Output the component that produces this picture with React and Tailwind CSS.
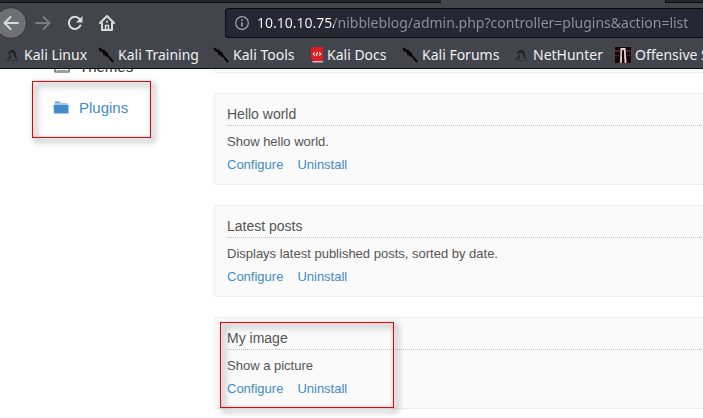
import React from "react";

function BackIcon() {
  return (
    <svg width="16" height="16" viewBox="0 0 16 16" fill="none" stroke="#dadad8" strokeWidth="2" strokeLinecap="round" strokeLinejoin="round">
      <path d="M15 8H1.5M7.5 2L1.5 8l6 6" />
    </svg>
  );
}

function ForwardIcon() {
  return (
    <svg width="16" height="16" viewBox="0 0 16 16" fill="none" stroke="#7b7d81" strokeWidth="2" strokeLinecap="round" strokeLinejoin="round">
      <path d="M1 8h13.5M8.500 2l6 6-6 6" />
    </svg>
  );
}

function ReloadIcon() {
  return (
    <svg width="16" height="16" viewBox="0 0 16 16" fill="none" stroke="#dadad8" strokeWidth="2" strokeLinecap="round">
      <path d="M13.300 10.500A6 6 0 1 1 12.500 4" />
      <path d="M15.500 1v6.500H9z" fill="#dadad8" stroke="none" />
    </svg>
  );
}

function HomeIcon() {
  return (
    <svg width="16" height="16" viewBox="0 0 16 16" fill="none" stroke="#dadad8" strokeWidth="2" strokeLinecap="round" strokeLinejoin="round">
      <path d="M1 8l7-7 7 7" />
      <path d="M3 8v7h10V8" />
      <path d="M6.500 15v-4.500h3V15" strokeWidth="1.500" />
      <path d="M8 6.500v.2" />
    </svg>
  );
}

function InfoIcon() {
  return (
    <svg width="14" height="14" viewBox="0 0 14 14" className="shrink-0" fill="none" stroke="#a5a6aa">
      <circle cx="7" cy="7" r="6.300" strokeWidth="1.200" />
      <path d="M7 6.200v4.300" strokeWidth="1.600" />
      <path d="M7 3.200v1.700" strokeWidth="1.600" />
    </svg>
  );
}

function DragonIcon() {
  return (
    <svg width="16" height="16" viewBox="0 0 16 16" className="shrink-0">
      <path d="M3.500 7.500C4.500 4.500 7 2.500 9.500 3.300c2.300.8 2 3.600 2.600 5.600.5 1.600 1.600 3.100 2.900 4.300-2.300-.8-4-2.200-4.700-4.200C9.700 7.200 9.600 5.600 8.300 5.400 6.700 5.200 5 6.300 3.500 7.500z" fill="#1d2024" />
      <path d="M7 6.200c-.5 2.200.6 3.600-.2 4.900-.9 1.400-3.300 1.600-5.800 2 1.800-1.300 3.900-1.700 4.200-3 .3-1.300.2-2.500 1.800-3.900z" fill="#25282d" />
      <path d="M2 13.800c3.500-1 8.500-1.100 13 .6-4-.4-9-.4-13-.6z" fill="#2b2e33" />
    </svg>
  );
}

function KnifeIcon() {
  return (
    <svg width="16" height="16" viewBox="0 0 16 16" className="shrink-0">
      <path d="M0 .5l3 .8 1.500 1.400 2-.2.700 2 2.300.7.600 2.300 2.900 3.500 3 3.500-1.500 1-2.800-2.700-1.200-2.600-2.500-.7-.8-1.800-2-.3L4.500 5 2.300 4.300z" fill="#050506" />
      <path d="M1 3l3.500 1.500M5 7l3 1.500" stroke="#050506" strokeWidth="1" />
    </svg>
  );
}

function DocsIcon() {
  return (
    <svg width="12" height="16" viewBox="0 0 12 16" className="shrink-0">
      <path d="M0 0h12v14H0z" fill="#e01b22" />
      <path d="M0 12.500h1.500V15H0z" fill="#253a68" />
      <path d="M1.500 14H12v1.500H1.500z" fill="#c8b9ba" />
      <path d="M3.800 5.300L2.300 7l1.500 1.700M8.200 5.300L9.700 7 8.200 8.700M6.600 5l-1.200 4" fill="none" stroke="#fff" strokeWidth="1.100" />
    </svg>
  );
}

function OffensiveIcon() {
  return (
    <svg width="16" height="16" viewBox="0 0 16 16" className="shrink-0">
      <path d="M0 0h16v16H0z" fill="#1c0507" />
      <path d="M0 3h5v2H0zM11 3h5v2h-5zM0 8h4v1H0zM12 8h4v1h-4z" fill="#4c2528" />
      <path d="M5.500 1h5l1 15H9.700L8.800 6H7.500l-.8 10H5z" fill="#ded4cf" />
      <path d="M7.200 3h1.600l.4 6L8 14 6.800 9z" fill="#0b0405" />
    </svg>
  );
}

function FolderIcon() {
  return (
    <svg width="16" height="14" viewBox="0 0 16 14" className="shrink-0">
      <path d="M2 1h5l1 1h6.500v2.500H1z" fill="#a6c8e6" />
      <path d="M2 .5h4.500v1H2z" fill="#428bca" />
      <path d="M.5 4h15v8l-.5.500H1.500L1 12z" fill="#428bca" />
    </svg>
  );
}

function ThemesIcon() {
  return (
    <svg width="16" height="14" viewBox="0 0 16 14" className="shrink-0" fill="none" stroke="#444">
      <path d="M1 1h14v9H1z" strokeWidth="1.200" />
      <path d="M3 8.500h10" strokeWidth="1" stroke="#999" />
    </svg>
  );
}

const bookmarks = [
  { label: "Kali Linux", icon: DragonIcon, width: "w-[94px]" },
  { label: "Kali Training", icon: KnifeIcon, width: "w-[115px]" },
  { label: "Kali Tools", icon: KnifeIcon, width: "w-[98px]" },
  { label: "Kali Docs", icon: DocsIcon, width: "w-[91px]" },
  { label: "Kali Forums", icon: KnifeIcon, width: "w-[111px]" },
  { label: "NetHunter", icon: DragonIcon, width: "w-[102px]" },
  { label: "Offensive Security", icon: OffensiveIcon, width: "w-[150px]" },
];

const plugins = [
  { name: "Hello world", text: "Show hello world." },
  { name: "Latest posts", text: "Displays latest published posts, sorted by date." },
  { name: "My image", text: "Show a picture", marked: true },
];

function Browser() {
  return (
    <header className="border-b border-[#0c0c0d] bg-[#42454c] font-['Noto_Sans',sans-serif]">
      <div className="flex h-[3px]">
        <div className="w-[441px] border-b border-[#0c0c0d] bg-[#252833]" />
        <div className="w-56" />
        <div className="flex-1 border-b border-l border-[#0c0c0d] bg-[#252833]" />
      </div>
      <div className="flex h-10 items-center">
        <nav aria-label="History" className="flex w-[225px] shrink-0 items-center">
          <button aria-label="Back" className="-ml-[5px] flex size-8 items-center justify-center rounded-full border border-[#303238] bg-[#6e7074]">
            <BackIcon />
          </button>
          <button aria-label="Forward" className="flex w-8 justify-center"><ForwardIcon /></button>
          <button aria-label="Reload" className="flex w-8 justify-center"><ReloadIcon /></button>
          <button aria-label="Home" className="flex w-8 justify-center"><HomeIcon /></button>
        </nav>
        <div className="flex h-[30px] flex-1 items-center gap-2 rounded-l-sm border border-r-0 border-[#0c0c0d] bg-[#252833] pl-[9px]">
          <InfoIcon />
          <input
            aria-label="Address"
            defaultValue="10.10.10.75/nibbleblog/admin.php?controller=plugins&action=list"
            className="min-w-0 flex-1 bg-[linear-gradient(90deg,#f9f9fa_77px,#909196_77px)] bg-clip-text text-sm text-transparent outline-none"
          />
        </div>
      </div>
      <nav aria-label="Bookmarks" className="flex h-[25px] overflow-hidden pl-1 text-sm text-[#f0f0f0]">
        {bookmarks.map(({ label, icon: Icon, width }) => (
          <a key={label} href="#" className={`flex h-6 shrink-0 items-center gap-1 whitespace-nowrap ${width}`}>
            <Icon />
            {label}
          </a>
        ))}
      </nav>
    </header>
  );
}

function Mark({ className }) {
  return <span className={`pointer-events-none absolute border border-[#f00000] drop-shadow-[3px_3px_3px_rgba(0,0,0,0.9)] ${className}`} />;
}

function Plugin({ name, text, marked }) {
  return (
    <article className="relative rounded-xs border border-[#eeeeee] bg-[#fafafa] px-3 py-[10px]">
      <h2 className="border-b border-dotted border-[#bbbbbb] text-sm leading-[21px]">{name}</h2>
      <p className="mt-[7px] text-[13px] leading-[18px]">{text}</p>
      <div className="mt-[5px] flex gap-[14px] text-[13px] leading-[18px] text-[#428bca]">
        <a href="#">Configure</a>
        <a href="#">Uninstall</a>
      </div>
      {marked && <Mark className="top-1 left-[5px] h-[86px] w-[174px]" />}
    </article>
  );
}

export default function App() {
  return (
    <div className="overflow-hidden bg-white">
      <Browser />
      <main className="flex font-['Liberation_Sans',Arial,sans-serif] text-[#555555]">
        <aside className="w-[214px] shrink-0 text-[15px] leading-5">
          <a href="#" className="flex h-[7px] items-end gap-[9px] overflow-hidden pl-[54px] text-[#333333]">
            <ThemesIcon />
            <span className="leading-[18px]">Themes</span>
          </a>
          <div className="relative mt-[5px] ml-8 h-[57px] w-[119px]">
            <a href="#" className="flex items-center gap-[10px] pt-[17px] pl-[21px] text-[#428bca]">
              <FolderIcon />
              Plugins
            </a>
            <Mark className="inset-0" />
          </div>
        </aside>
        <section className="-mr-4 flex min-w-0 flex-1 flex-col gap-5 pb-2">
          <div className="h-1 rounded-b-xs border border-t-0 border-[#eeeeee] bg-[#fafafa]" />
          {plugins.map((plugin) => (
            <Plugin key={plugin.name} {...plugin} />
          ))}
        </section>
      </main>
    </div>
  );
}
